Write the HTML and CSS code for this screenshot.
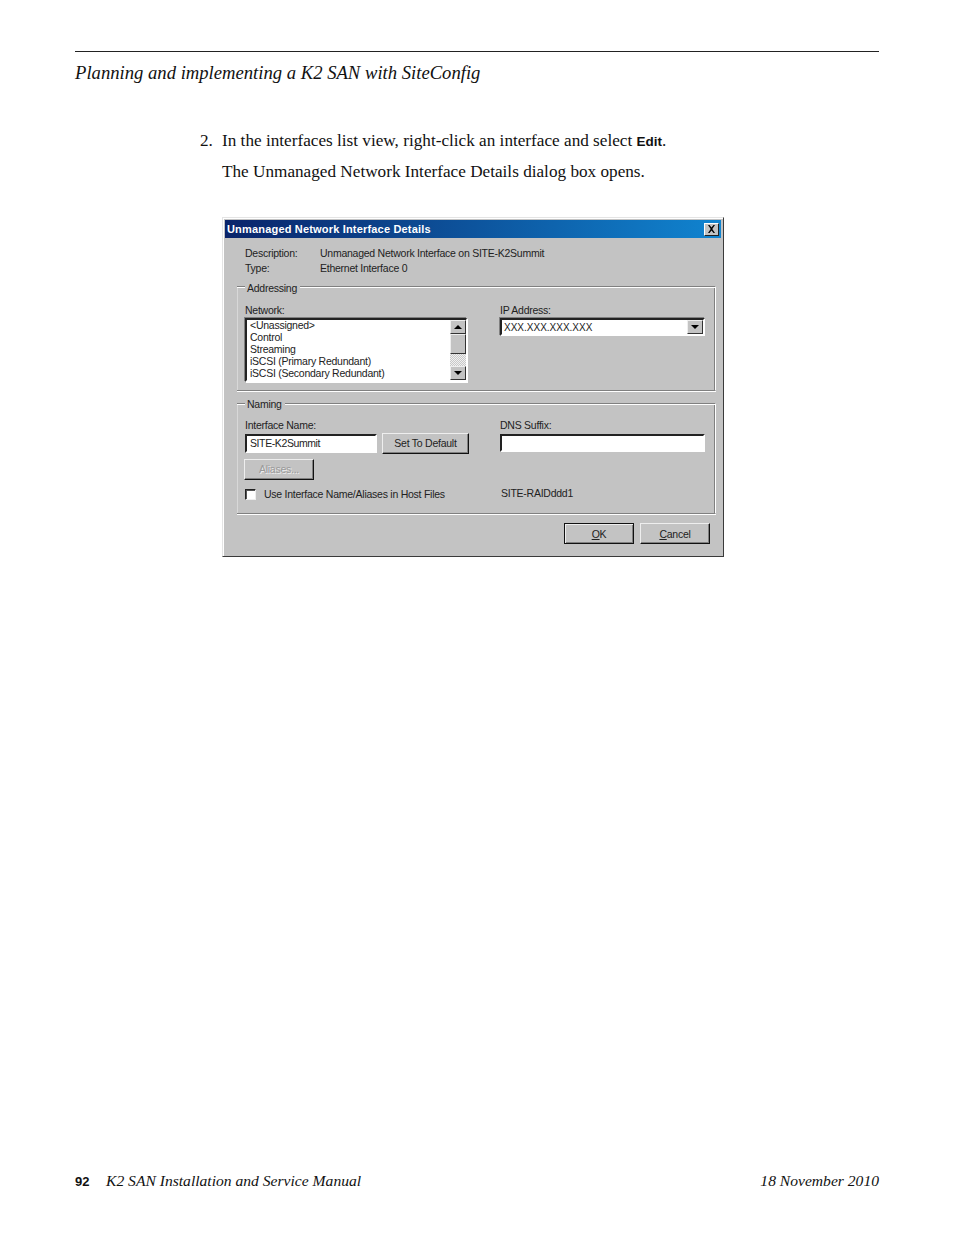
FILE: index.html
```html
<!DOCTYPE html>
<html lang="en">
<head>
<meta charset="utf-8">
<title>Planning and implementing a K2 SAN with SiteConfig</title>
<link rel="stylesheet" href="styles.css">
</head>
<body>
<div class="page">
  <header class="running-head">Planning and implementing a K2 SAN with SiteConfig</header>
  <main class="content">
    <div class="step"><span class="step-num">2.</span><span>In the interfaces list view, right-click an interface and select <b class="ui">Edit</b>.</span></div>
    <p class="para">The Unmanaged Network Interface Details dialog box opens.</p>
    <div class="dialog">
      <div class="titlebar">
        <span class="title">Unmanaged Network Interface Details</span>
        <span class="close"><svg width="9" height="8" viewBox="0 0 9 8"><path d="M1 0h1.500L4.500 2.500 6.500 0H8L5.300 4 8 8H6.500L4.500 5.500 2.500 8H1l2.700-4z" fill="#000"/></svg></span>
      </div>
      <div class="info"><span class="info-key">Description:</span><span>Unmanaged Network Interface on SITE-K2Summit</span></div>
      <div class="info info-type"><span class="info-key">Type:</span><span>Ethernet Interface 0</span></div>
      <section class="group group-addr">
        <span class="legend">Addressing</span>
        <div class="col">
          <label class="lbl lbl-tight">Network:</label>
          <div class="listbox">
            <ul class="items">
              <li>&lt;Unassigned&gt;</li>
              <li>Control</li>
              <li>Streaming</li>
              <li>iSCSI (Primary Redundant)</li>
              <li>iSCSI (Secondary Redundant)</li>
            </ul>
            <div class="scrollbar">
              <span class="sb-btn"><i class="arrow-up"></i></span>
              <span class="sb-thumb"></span>
              <span class="sb-track"></span>
              <span class="sb-btn"><i class="arrow-down"></i></span>
            </div>
          </div>
        </div>
        <div class="col">
          <label class="lbl lbl-tight">IP Address:</label>
          <div class="combo">
            <span class="combo-val">XXX.XXX.XXX.XXX</span>
            <span class="sb-btn combo-btn"><i class="arrow-down"></i></span>
          </div>
        </div>
      </section>
      <section class="group group-name">
        <span class="legend">Naming</span>
        <div class="col">
          <label class="lbl">Interface Name:</label>
          <div class="name-row">
            <div class="input input-name">SITE-K2Summit</div>
            <button class="btn btn-default">Set To Default</button>
          </div>
          <button class="btn btn-aliases">Aliases...</button>
          <div class="check-row"><span class="check"></span><span>Use Interface Name/Aliases in Host Files</span></div>
        </div>
        <div class="col">
          <label class="lbl">DNS Suffix:</label>
          <div class="input input-dns"></div>
          <div class="raid">SITE-RAIDddd1</div>
        </div>
      </section>
      <div class="actions">
        <button class="btn btn-act btn-ok"><u>O</u>K</button>
        <button class="btn btn-act"><u>C</u>ancel</button>
      </div>
    </div>
  </main>
  <footer class="foot">
    <span class="foot-left"><b class="pnum">92</b><i>K2 SAN Installation and Service Manual</i></span>
    <i>18 November 2010</i>
  </footer>
</div>
</body>
</html>
```
FILE: styles.css
```css
* { box-sizing: border-box; }
html, body { margin: 0; padding: 0; background: #fff; }
.page {
  width: 954px;
  height: 1235px;
  padding: 51px 75px 0;
  display: flex;
  flex-direction: column;
  font-family: "Liberation Serif", "Times New Roman", serif;
  color: #111;
}
.running-head {
  border-top: 1px solid #222;
  padding-top: 10px;
  font-style: italic;
  font-size: 18.65px;
  line-height: 22px;
  height: 60px;
}
.content { padding-left: 147px; flex: 1; font-size: 17.2px; line-height: 20px; padding-top: 20px; }
.step { display: flex; margin-left: -22px; }
.step-num { width: 22px; }
.ui { font-family: "Liberation Sans", Arial, sans-serif; font-size: 13.5px; }
.para { margin: 10px 0 0; }

.dialog {
  width: 502px;
  height: 340px;
  margin-top: 35px;
  padding: 2px 2px 0;
  background: #c3c3c3;
  border: 1px solid;
  border-color: #e4e4e4 #3a3a3a #3a3a3a #e4e4e4;
  font-family: "Liberation Sans", Arial, sans-serif;
  font-size: 10.5px;
  letter-spacing: -.25px;
  line-height: 13px;
  color: #222;
  display: flex;
  flex-direction: column;
  box-shadow: inset 1px 1px 0 #fff;
}
.titlebar {
  height: 18px;
  flex: none;
  background: linear-gradient(90deg, #0a246a, #1084d0);
  color: #fff;
  font-weight: bold;
  font-size: 11px;
  letter-spacing: .18px;
  display: flex;
  align-items: center;
  justify-content: space-between;
  padding: 0 2px;
}
.close {
  width: 15px;
  height: 13px;
  background: #c3c3c3;
  border: 1px solid;
  border-color: #fff #222 #222 #fff;
  display: flex;
  align-items: center;
  justify-content: center;
}
.info { display: flex; margin-left: 20px; margin-top: 9px; height: 13px; }
.info-type { margin-top: 2px; }
.info-key { width: 75px; }

.group {
  position: relative;
  margin-left: 12px;
  width: 479px;
  border-top: 1px solid #808080;
  border-bottom: 1px solid #808080;
  border-right: 1px solid #fff;
  box-shadow: inset 0 1px 0 #fff, 0 1px 0 #fff, inset -1px 0 0 #808080, inset 1px 0 0 #d8d8d8;
  display: grid;
  grid-template-columns: 255px 205px;
  padding-left: 8px;
}
.group-addr { margin-top: 11px; height: 105px; padding-top: 17px; }
.group-name { margin-top: 12px; height: 111px; padding-top: 15px; }
.legend {
  position: absolute;
  left: 8px;
  top: -6px;
  padding: 0 3px 0 2px;
  background: #c3c3c3;
}
.group-addr .legend { top: -5px; }
.col { display: flex; flex-direction: column; }
.lbl { height: 15px; }
.lbl-tight { height: 14px; }
.listbox {
  width: 222px;
  height: 64px;
  background: #fff;
  border: 2px solid;
  border-right-width: 1px;
  border-color: #222 #fff #fff #222;
  box-shadow: -1px -1px 0 #808080, 1px 1px 0 #fff;
  display: flex;
  justify-content: space-between;
}
.items { list-style: none; margin: -1px 0 0; padding: 0 0 0 3px; line-height: 12px; white-space: nowrap; }
.scrollbar { width: 16px; display: flex; flex-direction: column; }
.sb-btn {
  width: 16px;
  height: 14px;
  flex: none;
  background: #c3c3c3;
  border: 1px solid;
  border-color: #eee #333 #333 #eee;
  display: flex;
  align-items: center;
  justify-content: center;
}
.sb-thumb { height: 20px; background: #c3c3c3; border: 1px solid; border-color: #eee #333 #333 #eee; }
.sb-track { flex: 1; background: repeating-conic-gradient(#c8c8c8 0 25%, #f0f0f0 0 50%) 0 0 / 2px 2px; }
.arrow-up, .arrow-down { width: 0; height: 0; border-left: 4px solid transparent; border-right: 4px solid transparent; }
.arrow-up { border-bottom: 4px solid #000; }
.arrow-down { border-top: 4px solid #000; }
.combo {
  width: 205px;
  height: 18px;
  background: #fff;
  border: 2px solid;
  border-color: #222 #fff #fff #222;
  box-shadow: -1px -1px 0 #808080;
  display: flex;
  align-items: center;
  justify-content: space-between;
  padding-left: 2px;
}
.combo-val { font-size: 10px; letter-spacing: 0; line-height: 12px; margin-top: 1px; }
.combo-btn { height: 14px; }
.name-row { display: flex; align-items: flex-start; gap: 5px; margin-top: -1px; }
.input {
  height: 19px;
  background: #fff;
  border: 2px solid;
  border-color: #222 #fff #fff #222;
  padding-left: 3px;
  line-height: 15px;
  margin-top: 1px;
}
.input-name { width: 132px; letter-spacing: -.4px; }
.input-dns { width: 205px; margin-top: 0; height: 18px; }
.btn {
  width: 70px;
  height: 21px;
  padding: 0;
  background: #c3c3c3;
  border: 1px solid;
  border-color: #eee #111 #111 #eee;
  box-shadow: inset -1px -1px 0 #808080;
  font: inherit;
  letter-spacing: inherit;
  color: inherit;
  text-align: center;
}
.btn-default { width: 87px; }
.btn-aliases { margin-top: 5px; margin-left: -1px; color: #9a9a9a; text-shadow: 1px 1px 0 #eee; }
.btn-act { padding-top: 1px; }
.check-row { display: flex; align-items: center; gap: 8px; margin-top: 8px; height: 12px; }
.check {
  width: 11px;
  height: 11px;
  background: #fff;
  border: 1px solid;
  border-color: #222 #eee #eee #222;
  box-shadow: inset 1px 1px 0 #555;
}
.raid { margin-top: 35px; margin-left: 1px; }
.actions { display: flex; justify-content: flex-end; gap: 6px; padding-right: 11px; margin-top: 9px; }
.btn-ok { border-color: #111; box-shadow: inset 1px 1px 0 #eee, inset -1px -1px 0 #808080; }

.foot {
  display: flex;
  justify-content: space-between;
  font-size: 15.6px;
  line-height: 18px;
  margin-bottom: 44px;
}
.foot-left { display: flex; align-items: baseline; }
.pnum { font-family: "Liberation Sans", Arial, sans-serif; font-size: 13px; width: 31px; }
```
